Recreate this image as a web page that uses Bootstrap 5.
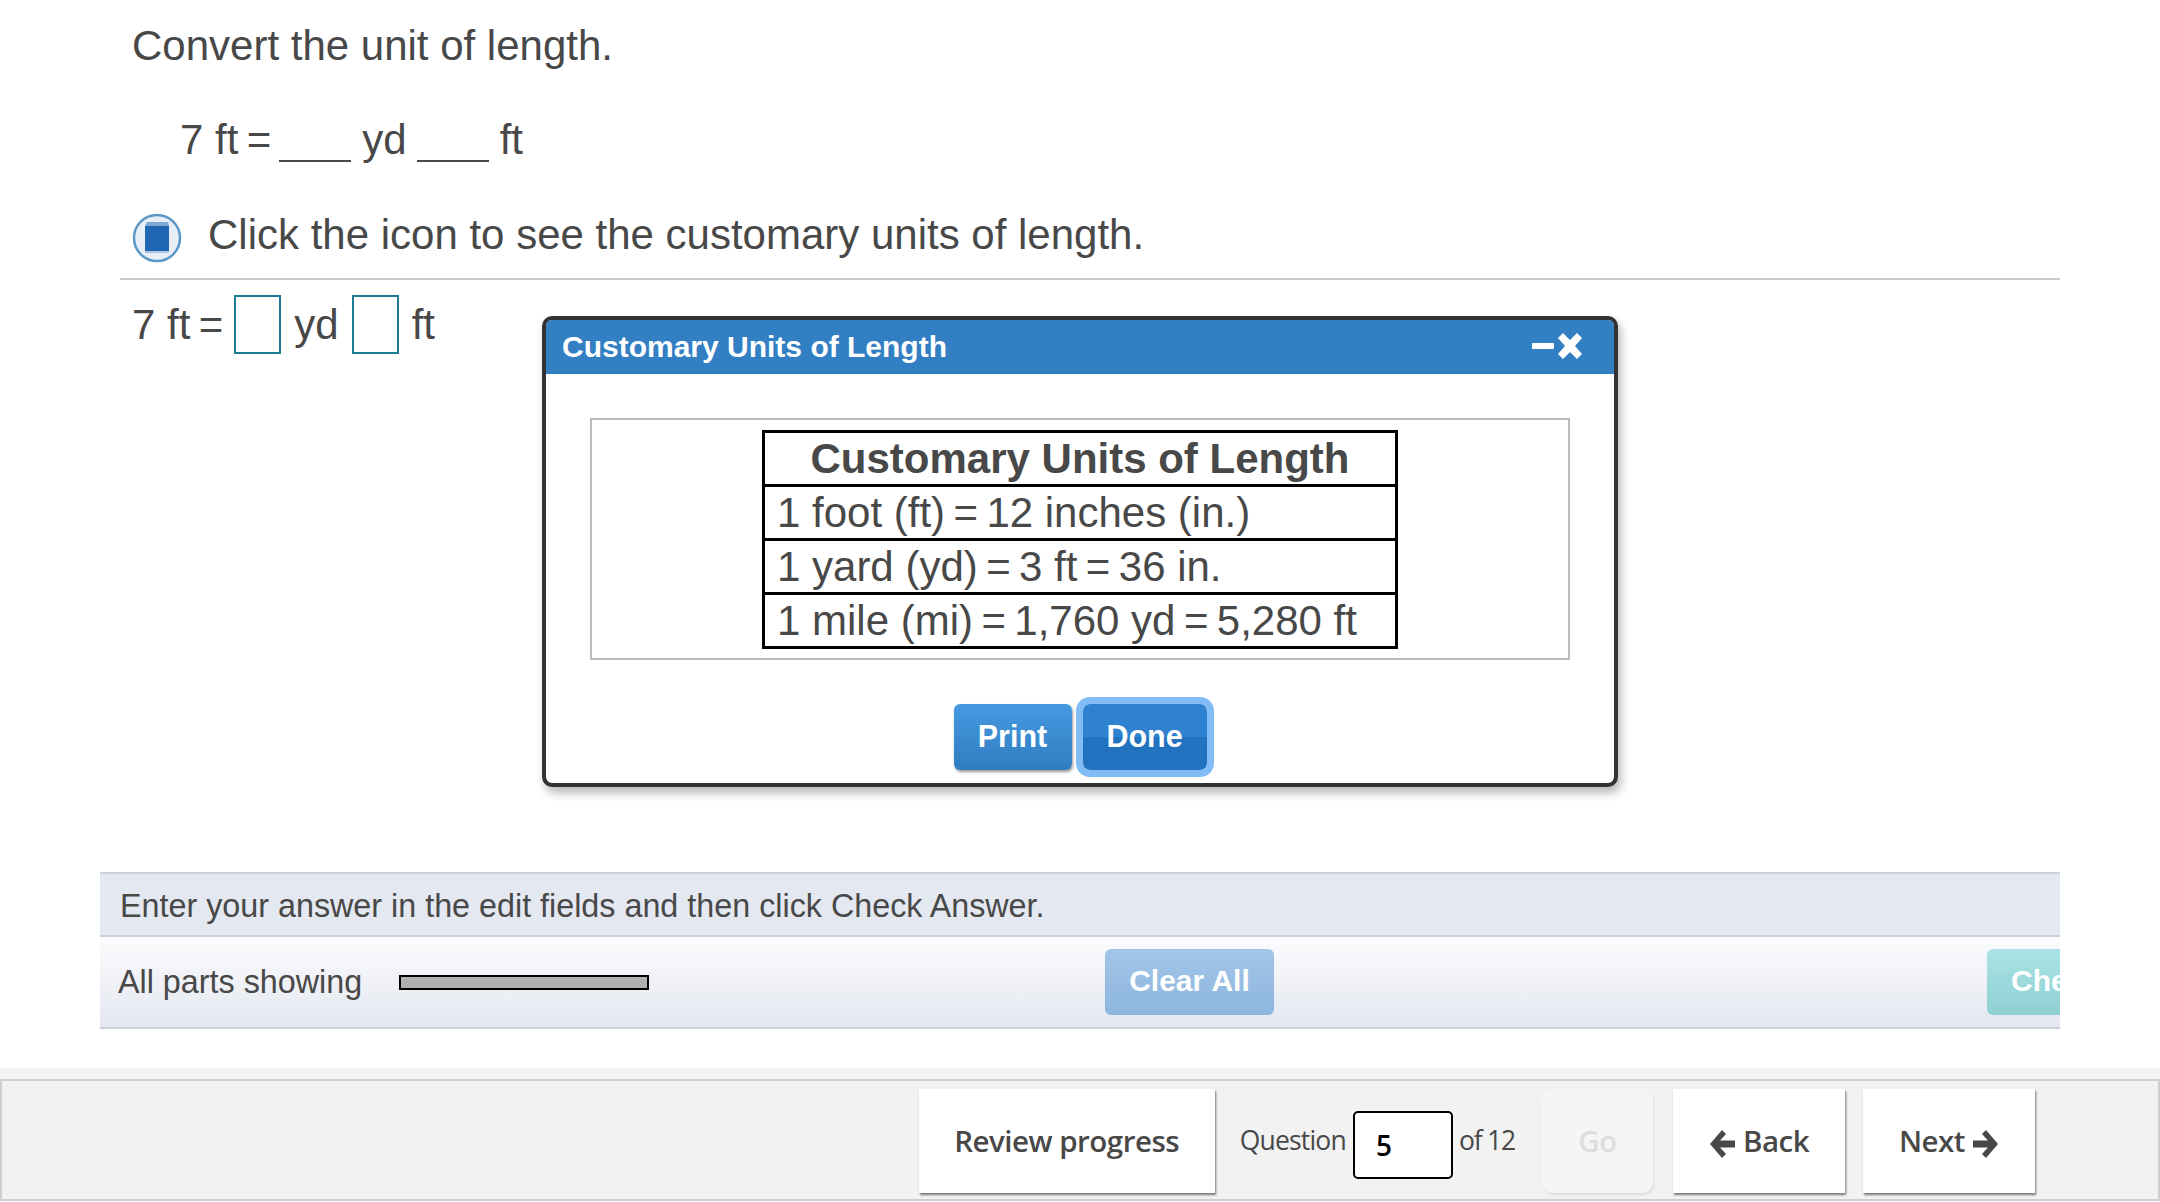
<!DOCTYPE html>
<html lang="en">
<head>
  <meta charset="UTF-8">
  <title>Convert the unit of length</title>
  <link rel="stylesheet" href="https://cdn.jsdelivr.net/npm/bootstrap@5.3.2/dist/css/bootstrap.min.css">
  <style>
    html, body { height: 100%; }
    body { font-family: "Liberation Sans", Arial, sans-serif; color: #484848; background: #fff; overflow: hidden; }
    .page-wrap { height: 1202px; position: relative; }
    .question-pane { height: 1068px; padding-left: 100px; padding-right: 100px; }
    .stem { padding-left: 32px; padding-top: 22px; font-size: 42px; line-height: 48px; }
    .stem-eq { padding-left: 48px; margin-top: 46px; height: 48px; }
    .blank { display: inline-block; width: 72px; border-bottom: 2px solid #484848; height: 38px; vertical-align: -8px; margin: 0 11px 0 8px; }
    .blank-two { margin-left: 10px; }
    .stem-note { margin-top: 45px; height: 52px; gap: 26px; }
    .note-icon { margin-top: 6px; }
    .rule-line { margin: 17px 0 0 20px; border-top: 2px solid #ccc; }
    .answer-line { padding-left: 32px; height: 74px; margin-top: 7px; font-size: 42px; }
    .answer-box { width: 47px; height: 59px; border: 2px solid #1d7b94; background: #fff; }
    .box-one { margin: 0 13px 0 11px; }
    .box-two { margin: 0 13px 0 13px; }
    .instr-bar { margin-top: 511px; height: 65px; background: #e4e8f1; border-top: 2px solid #cdd1db; border-bottom: 2px solid #cdd1db; padding-left: 20px; padding-top: 3px; font-size: 32.3px; }
    .ctrl-bar { height: 92px; background: linear-gradient(#fbfcfd, #e4e7f0); border-bottom: 2px solid #cdd1db; position: relative; font-size: 32.3px; padding-left: 18px; overflow: hidden; }
    .parts-meter { width: 250px; height: 15px; background: #b0b0b0; border: 2px solid #000; margin-left: 37px; }
    .soft-btn { position: absolute; top: 12px; height: 66px; border: 0; border-radius: 6px; color: #fff; font-weight: 700; font-size: 30px; padding: 0 0 3px 0; white-space: nowrap; }
    .soft-clear { left: 1005px; width: 169px; background: linear-gradient(#a3c6e9, #8db5de); }
    .soft-check { left: 1887px; width: 220px; background: linear-gradient(#aae3e6, #8fd0d3); text-align: left; padding-left: 24px; }
    .soft-clear:hover, .soft-check:hover { color: #fff; }
    .foot-strip { height: 11px; background: #f3f3f3; }
    .foot-bar { height: 122px; background: #f2f2f2; border: 2px solid #cfcfcf; padding-top: 2px; padding-right: 123px; font-family: "Open Sans", sans-serif; }
    .foot-btn { height: 104px; background: #fff; border: 0; border-radius: 0; box-shadow: 1px 2px 2px #777; font-size: 29.5px; font-weight: 600; color: #484848; padding: 0; letter-spacing: -0.5px; }
    .foot-btn:hover { background: #fff; color: #484848; }
    .foot-review { width: 296px; }
    .foot-back, .foot-next { width: 172px; }
    .foot-back { margin-left: 20px; }
    .foot-next { margin-left: 18px; }
    .foot-go { width: 111px; margin-left: 27px; background: #f5f5f5; color: #ddd; border-radius: 10px; box-shadow: 1px 2px 2px #ddd; }
    .foot-label { font-size: 26.5px; letter-spacing: -0.4px; }
    .foot-of { letter-spacing: -1.2px; }
    .foot-q { margin-left: 25px; letter-spacing: -0.8px; }
    .foot-num { width: 100px; height: 68px; border: 2px solid #000; border-radius: 5px; margin: 8px 6px 0 7px; background: #fff; color: #000; font-size: 28px; font-weight: 600; padding: 12px 0 0 21px; line-height: 40px; }
    .units-dialog { position: absolute; left: 542px; top: 316px; width: 1076px; height: 471px; background: #fff; border: 4px solid #333; border-radius: 10px; box-shadow: 3px 6px 10px rgba(0,0,0,.28); }
    .units-head { height: 54px; background: #337fc4; color: #fff; font-weight: 700; font-size: 30px; padding: 0 30px 2px 16px; border-radius: 6px 6px 0 0; }
    .units-frame { margin: 44px 44px 0 44px; height: 242px; border: 2px solid #bbb; padding-top: 10px; }
    .units-table { width: 636px; border-collapse: collapse; margin: 0 auto; font-size: 42px; line-height: 50px; color: #484848; }
    .units-table td, .units-table th { border: 3px solid #000; height: 54px; padding: 0 12px; }
    .units-table th { text-align: center; font-weight: 700; }
    .units-btns { margin-top: 44px; gap: 11px; }
    .dlg-btn { height: 66px; border: 0; border-radius: 6px; color: #fff; font-weight: 700; font-size: 30.5px; padding: 0; }
    .dlg-print { width: 118px; background: linear-gradient(#459ae0, #317cc0); box-shadow: 1px 2px 3px #999; }
    .dlg-done { width: 124px; background: linear-gradient(#2f82cf 50%, #2272bf 50%); box-shadow: 0 0 0 7px #82bcf6; border-radius: 7px; }
    .dlg-print:hover, .dlg-done:hover { color: #fff; }
  </style>
</head>
<body>
  <div class="page-wrap d-flex flex-column">
    <div class="question-pane">
      <div class="stem">
        <div>Convert the unit of length.</div>
        <div class="stem-eq">7 ft&#8201;=<span class="blank"></span>yd<span class="blank blank-two"></span>ft</div>
        <div class="stem-note d-flex align-items-center">
          <svg class="note-icon" width="50" height="50" viewBox="0 0 50 50">
            <circle cx="25" cy="25" r="23" fill="#e8eef8" stroke="#5b97c6" stroke-width="2.5"/>
            <path d="M13 13 L15 9 H36 L37 13 Z" fill="#7fa9d4"/>
            <rect x="13" y="13" width="24" height="25" fill="#1f66b5"/>
            <rect x="13" y="38" width="24" height="2" fill="#a9c6e4"/>
          </svg>
          <span>Click the icon to see the customary units of length.</span>
        </div>
      </div>
      <div class="rule-line"></div>
      <div class="answer-line d-flex align-items-center">
        <span>7 ft&#8201;=</span><span class="answer-box box-one"></span><span>yd</span><span class="answer-box box-two"></span><span>ft</span>
      </div>
      <div class="instr-bar d-flex align-items-center">Enter your answer in the edit fields and then click Check Answer.</div>
      <div class="ctrl-bar d-flex align-items-center">
        <span>All parts showing</span>
        <div class="parts-meter"></div>
        <button type="button" class="btn soft-btn soft-clear">Clear All</button>
        <button type="button" class="btn soft-btn soft-check">Check Answer</button>
      </div>
    </div>
    <div class="foot-strip"></div>
    <div class="foot-bar d-flex align-items-center justify-content-end">
      <button type="button" class="btn foot-btn foot-review">Review progress</button>
      <span class="foot-label foot-q">Question</span>
      <div class="foot-num">5</div>
      <span class="foot-label foot-of">of 12</span>
      <button type="button" class="btn foot-btn foot-go">Go</button>
      <button type="button" class="btn foot-btn foot-back">
        <svg width="27" height="30" viewBox="0 0 27 30"><path d="M13 1 L1 15 L13 29 L17 25 L11 18.5 H26 V11.5 H11 L17 5 Z" fill="#484848"/></svg> Back
      </button>
      <button type="button" class="btn foot-btn foot-next">
        Next <svg width="27" height="30" viewBox="0 0 27 30"><path d="M14 1 L26 15 L14 29 L10 25 L16 18.5 H1 V11.5 H16 L10 5 Z" fill="#484848"/></svg>
      </button>
    </div>

    <div class="units-dialog">
      <div class="units-head d-flex align-items-center justify-content-between">
        <span>Customary Units of Length</span>
        <svg width="52" height="28" viewBox="0 0 52 28">
          <rect x="0" y="11" width="22" height="6" rx="1" fill="#fff"/>
          <path d="M26 6 L31 1 L38 8 L45 1 L50 6 L43 14 L50 22 L45 27 L38 20 L31 27 L26 22 L33 14 Z" fill="#fff"/>
        </svg>
      </div>
      <div class="units-frame">
        <table class="units-table">
          <tr><th>Customary Units of Length</th></tr>
          <tr><td>1 foot (ft)&#8201;=&#8201;12 inches (in.)</td></tr>
          <tr><td>1 yard (yd)&#8201;=&#8201;3 ft&#8201;=&#8201;36 in.</td></tr>
          <tr><td>1 mile (mi)&#8201;=&#8201;1,760 yd&#8201;=&#8201;5,280 ft</td></tr>
        </table>
      </div>
      <div class="units-btns d-flex justify-content-center">
        <button type="button" class="btn dlg-btn dlg-print">Print</button>
        <button type="button" class="btn dlg-btn dlg-done">Done</button>
      </div>
    </div>
  </div>
  <script src="https://cdn.jsdelivr.net/npm/bootstrap@5.3.2/dist/js/bootstrap.bundle.min.js"></script>
</body>
</html>
